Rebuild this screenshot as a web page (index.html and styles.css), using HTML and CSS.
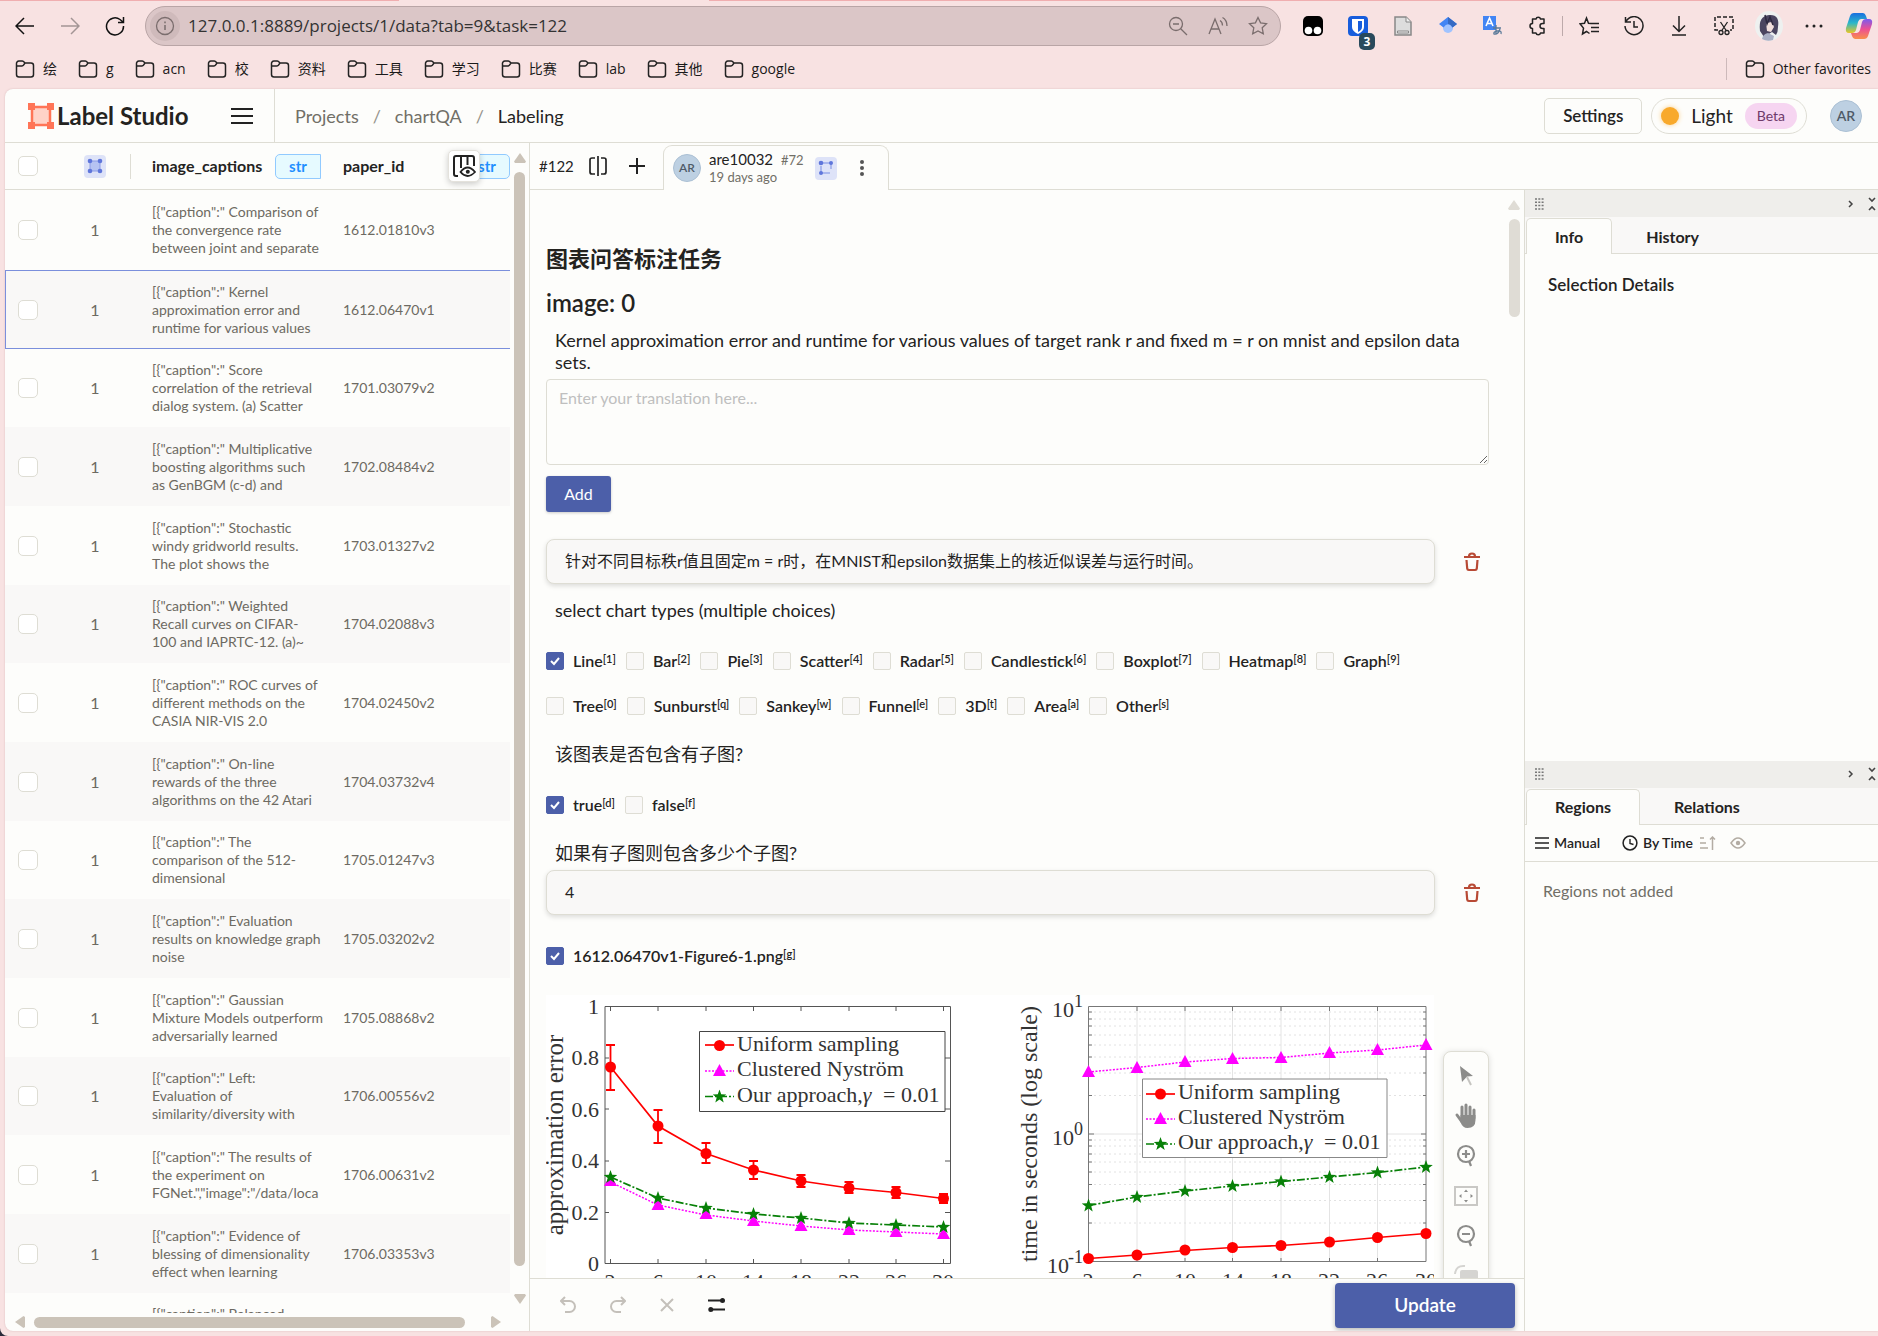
FILE: index.html
```html
<!DOCTYPE html>
<html lang="en">
<head>
<meta charset="utf-8">
<title>Label Studio</title>
<link rel="stylesheet" href="styles.css">
</head>
<body>
<svg class="defs" width="0" height="0" aria-hidden="true">
  <symbol id="folder" viewBox="0 0 20 20"><path d="M1.500 5V15.500a2.500 2.500 0 0 0 2.500 2.500h12a2.500 2.500 0 0 0 2.500-2.500V6.500A2.500 2.500 0 0 0 16 4h-6L8.500 2.500A2 2 0 0 0 7 2H4a2.500 2.500 0 0 0-2.500 3zM1.500 7H7q1 0 1.500-.8L10 4" fill="none" stroke="#222" stroke-width="1.500"/></symbol>
  <symbol id="trash" viewBox="0 0 18 20"><path d="M1 5h16M6 4.500Q6 1.500 9 1.500T12 4.500M3.500 8l.7 8.500q.2 1.500 1.600 1.500h6.400q1.400 0 1.600-1.500L14.500 8" fill="none" stroke="#b84a35" stroke-width="2.200"/></symbol>
  <symbol id="grip" viewBox="0 0 9 12"><path d="M0 1h9M0 4.300h9M0 7.600h9M0 11h9" stroke="#777" stroke-width="1.500" stroke-dasharray="2 1.300"/></symbol>
  <symbol id="collapse" viewBox="0 0 8 14"><path d="M1 1l3 3 3-3M1 13l3-3 3 3" fill="none" stroke="#444" stroke-width="1.600"/></symbol>
  <symbol id="chev" viewBox="0 0 6 8"><path d="M1 1l3 3-3 3" fill="none" stroke="#444" stroke-width="1.500"/></symbol>
  <symbol id="dot" viewBox="-7 -7 14 14"><circle r="5.500" fill="#f00"/></symbol>
  <symbol id="tri" viewBox="-7 -7 14 14"><path d="M0-7L6.500 5h-13z" fill="#f0f"/></symbol>
  <symbol id="star" viewBox="-7 -7 14 14"><path d="M0-7l1.700 4.800 5.100.1-4 3.100L4.200 6 0 3-4.200 6l1.400-5-4-3.100 5.100-.1z" fill="#078007"/></symbol>
</svg>

<header class="toolbar">
  <button class="nav" aria-label="Back"><svg width="20" height="20" viewBox="0 0 20 20"><path d="M19 10H1M9 2L1 10l8 8" fill="none" stroke="#111" stroke-width="1.500"/></svg></button>
  <button class="nav" aria-label="Forward"><svg width="20" height="20" viewBox="0 0 20 20"><path d="M1 10h18M11 2l8 8-8 8" fill="none" stroke="#a39595" stroke-width="1.500"/></svg></button>
  <button class="nav" aria-label="Reload"><svg width="20" height="20" viewBox="0 0 20 20"><path d="M18.500 10A8.500 8.500 0 1 1 15 3.500L18 6M18.500 1v5.500H13" fill="none" stroke="#111" stroke-width="1.500"/></svg></button>
  <div class="address">
    <span class="site"><svg width="20" height="20" viewBox="0 0 20 20"><circle cx="10" cy="10" r="8.500" fill="none" stroke="#7a6d6d" stroke-width="1.300"/><path d="M10 9v5M10 5.500v1.800" stroke="#7a6d6d" stroke-width="1.500"/></svg></span>
    <input class="url" aria-label="Address" value="127.0.0.1:8889/projects/1/data?tab=9&amp;task=122">
    <svg width="20" height="20" viewBox="0 0 20 20"><g fill="none" stroke="#7a6d6d" stroke-width="1.300"><circle cx="8" cy="8" r="6.500"/><path d="M5 8h6M12.700 12.700L19 19"/></g></svg>
    <svg width="20" height="20" viewBox="0 0 20 20"><g fill="none" stroke="#7a6d6d" stroke-width="1.300"><path d="M1 18L7 3l6 15M3 13h8M12 4.500q2.500 1.500 2.500 5M14.500 1.500Q19 4 19 10"/></g></svg>
    <svg width="20" height="20" viewBox="0 0 20 20"><path d="M10 1.500l2.600 5.400 5.900.8-4.300 4.100 1.100 5.900L10 14.900l-5.300 2.800 1.100-5.900L1.500 7.700l5.900-.8z" fill="none" stroke="#7a6d6d" stroke-width="1.300"/></svg>
  </div>
  <div class="ext">
    <button aria-label="Tampermonkey"><svg width="20" height="20" viewBox="0 0 20 20"><rect width="20" height="20" rx="5" fill="#000"/><circle cx="5.500" cy="14.500" r="3.800" fill="#fff"/><circle cx="14.500" cy="14.500" r="3.800" fill="#fff"/></svg></button>
    <button class="badged" aria-label="Bitwarden"><svg width="20" height="20" viewBox="0 0 20 20"><rect width="20" height="20" rx="4" fill="#175ddc"/><path d="M4 3h12v8q0 4-6 7-6-3-6-7z" fill="#fff"/><path d="M10 5h4v6q0 3-4 5z" fill="#175ddc"/></svg><span class="count">3</span></button>
    <button aria-label="Reader"><svg width="20" height="20" viewBox="0 0 20 20"><path d="M2 1h11l5 5v13H2z" fill="#ddd" stroke="#888" stroke-width="1.500"/><path d="M13 1v5h5M4.500 15h11v2h-11z" fill="#eee" stroke="#888"/></svg></button>
    <button aria-label="Scholar"><svg width="20" height="20" viewBox="0 0 20 20"><circle cx="10" cy="12" r="5" fill="#a0c3ff"/><path d="M10 1l9 7-4.500 3.500Q10 5 5.500 11.500L1 8z" fill="#4285f4"/><path d="M10 1l9 7-4.500 3.500Q13 8 10 8z" fill="#356ac3"/></svg></button>
    <button aria-label="Translate"><svg width="20" height="20" viewBox="0 0 20 20"><path d="M0 0h13v14H0z" fill="#4285f4"/><path d="M3 10l3.500-8L10 10M4.500 7.500h4" fill="none" stroke="#fff" stroke-width="1.600"/><path d="M10 12h8M13 9v9M17 13q-2 6-6 5-1-2 3-3 5-1 4 3" fill="none" stroke="#5b7a99" stroke-width="1.300"/></svg></button>
    <button aria-label="Extensions"><svg width="20" height="20" viewBox="0 0 20 20"><path d="M4.500 3H8a2.300 2.300 0 0 1 4.500 0H16v4.500h-1.500a2.500 2.500 0 0 0 0 5H16V17h-3.500a2.300 2.300 0 0 1-4.500 0H4.500v-4.500a2.400 2.400 0 0 1 0-5z" fill="none" stroke="#222" stroke-width="1.500" stroke-linejoin="round"/></svg></button>
    <span class="rule"></span>
    <button aria-label="Favorites"><svg width="20" height="20" viewBox="0 0 20 20"><path d="M12 7.500L9.500 7.200 7.500 2 5.500 7.200 1 7.800l3.500 4.300L3.500 18l4-2.500 3 2M11.500 7.500H20M12 11.500h8M12 15.500h8" fill="none" stroke="#222" stroke-width="1.500"/></svg></button>
    <button aria-label="History"><svg width="20" height="20" viewBox="0 0 20 20"><path d="M2 5.500A9 9 0 1 1 1 10M1.500 1v5H7M10 5v6h4" fill="none" stroke="#222" stroke-width="1.500"/></svg></button>
    <button aria-label="Downloads"><svg width="20" height="20" viewBox="0 0 20 20"><path d="M10 0v15M4 9.500l6 6 6-6M3 19h14" fill="none" stroke="#222" stroke-width="1.500"/></svg></button>
    <button aria-label="Screenshot"><svg width="20" height="20" viewBox="0 0 20 20"><path d="M4 14H1V1h18v13h-3" fill="none" stroke="#222" stroke-width="1.500" stroke-dasharray="4 2"/><path d="M6.500 6l6 9M13.500 6l-6 9" stroke="#222" stroke-width="1.300"/><circle cx="7" cy="16.500" r="2" fill="none" stroke="#222" stroke-width="1.300"/><circle cx="13" cy="16.500" r="2" fill="none" stroke="#222" stroke-width="1.300"/></svg></button>
    <button aria-label="Profile"><svg width="28" height="30" viewBox="0 0 28 30"><ellipse cx="14" cy="15" rx="14" ry="15" fill="#eef1f0"/><path d="M5 20Q3 5 14 4t9 12q0 5-2 8l-4-3-8 5z" fill="#4a4560"/><path d="M11 12l6-1 2 5-3 5-4-1z" fill="#f1dfdc"/><path d="M10 4l2 9 3-7 3 8" fill="none" stroke="#2d2940" stroke-width="1.500"/><path d="M7 28q1-5 6-6l6 3-1 4q-6 2-11-1z" fill="#a9afc4"/></svg></button>
    <button aria-label="More"><svg width="18" height="4" viewBox="0 0 18 4"><path d="M2 2h0M9 2h0M16 2h0" stroke="#222" stroke-width="3" stroke-linecap="round"/></svg></button>
    <button aria-label="Copilot"><svg width="28" height="28" viewBox="0 0 28 28"><defs><linearGradient id="ga" x2="0" y2="1"><stop stop-color="#1a6fe0"/><stop offset=".5" stop-color="#2bb7c9"/><stop offset="1" stop-color="#e8c626"/></linearGradient><linearGradient id="gb" x2="0" y2="1"><stop stop-color="#7a5bf0"/><stop offset=".5" stop-color="#ec4f94"/><stop offset="1" stop-color="#f98f4a"/></linearGradient></defs><path d="M9 1h9q2 0 3 3l1 3h-6q-2 0-3 3l-2 8q-1 3-4 3H4q-4 0-3-5L5 4q1-3 4-3z" fill="url(#ga)"/><path d="M19 27h-9q-2 0-3-3l-1-3h6q2 0 3-3l2-8q1-3 4-3h3q4 0 3 5l-4 12q-1 3-4 3z" fill="url(#gb)"/></svg></button>
  </div>
</header>

<nav class="bookmarks" aria-label="Bookmarks">
  <a href="#"><svg width="20" height="20"><use href="#folder"/></svg>绘</a>
  <a href="#"><svg width="20" height="20"><use href="#folder"/></svg>g</a>
  <a href="#"><svg width="20" height="20"><use href="#folder"/></svg>acn</a>
  <a href="#"><svg width="20" height="20"><use href="#folder"/></svg>校</a>
  <a href="#"><svg width="20" height="20"><use href="#folder"/></svg>资料</a>
  <a href="#"><svg width="20" height="20"><use href="#folder"/></svg>工具</a>
  <a href="#"><svg width="20" height="20"><use href="#folder"/></svg>学习</a>
  <a href="#"><svg width="20" height="20"><use href="#folder"/></svg>比赛</a>
  <a href="#"><svg width="20" height="20"><use href="#folder"/></svg>lab</a>
  <a href="#"><svg width="20" height="20"><use href="#folder"/></svg>其他</a>
  <a href="#"><svg width="20" height="20"><use href="#folder"/></svg>google</a>
  <a class="other" href="#"><svg width="20" height="20"><use href="#folder"/></svg>Other favorites</a>
</nav>

<div class="app">
  <header class="appbar">
    <div class="brand">
      <svg width="26" height="26" viewBox="0 0 26 26"><path d="M4 4h18v18H4z" fill="#ffd3c8" stroke="#ff7557" stroke-width="2.500"/><path d="M0 0h7v7H0zM19 0h7v7h-7zM0 19h7v7H0zM19 19h7v7h-7z" fill="#ff7557"/></svg>
      <span class="name">Label Studio</span>
      <button class="menu" aria-label="Menu"><svg width="22" height="16" viewBox="0 0 22 16"><path d="M0 1h22M0 8h22M0 15h22" stroke="#222" stroke-width="2"/></svg></button>
    </div>
    <nav class="crumbs" aria-label="Breadcrumb"><a href="#">Projects</a><i>/</i><a href="#">chartQA</a><i>/</i><a class="here" href="#">Labeling</a></nav>
    <button class="settings">Settings</button>
    <button class="theme"><span class="sun"></span><span>Light</span><span class="beta">Beta</span></button>
    <span class="avatar big">AR</span>
  </header>

  <div class="work">
    <section class="tasks">
      <div class="tasks-top">
        <div class="tablebox">
          <table>
            <colgroup><col class="c1"><col class="c2"><col class="c3"><col class="c4"></colgroup>
            <thead><tr>
              <th><input class="tick" type="checkbox" aria-label="Select all"></th>
              <th class="mid"><span class="chip"><svg width="16" height="16" viewBox="0 0 16 16"><path d="M3 3h10v10H3z" fill="#b6c3f2" stroke="#8c9ce6"/><g fill="#5f76db"><circle cx="3" cy="3" r="2.300"/><circle cx="13" cy="3" r="2.300"/><circle cx="3" cy="13" r="2.300"/><circle cx="13" cy="13" r="2.300"/></g></svg></span></th>
              <th><div class="head ruled"><span>image_captions</span><span class="tag cut">str</span></div></th>
              <th><div class="head"><span>paper_id</span><span class="tag">str</span></div></th>
            </tr></thead>
            <tbody>
              <tr><td><input class="tick" type="checkbox" aria-label="Select 1612.01810v3"></td><td class="mid">1</td><td>[{"caption":" Comparison of<br>the convergence rate<br>between joint and separate</td><td>1612.01810v3</td></tr>
              <tr class="current"><td><input class="tick" type="checkbox" aria-label="Select 1612.06470v1"></td><td class="mid">1</td><td>[{"caption":" Kernel<br>approximation error and<br>runtime for various values</td><td>1612.06470v1</td></tr>
              <tr><td><input class="tick" type="checkbox" aria-label="Select 1701.03079v2"></td><td class="mid">1</td><td>[{"caption":" Score<br>correlation of the retrieval<br>dialog system. (a) Scatter</td><td>1701.03079v2</td></tr>
              <tr><td><input class="tick" type="checkbox" aria-label="Select 1702.08484v2"></td><td class="mid">1</td><td>[{"caption":" Multiplicative<br>boosting algorithms such<br>as GenBGM (c-d) and</td><td>1702.08484v2</td></tr>
              <tr><td><input class="tick" type="checkbox" aria-label="Select 1703.01327v2"></td><td class="mid">1</td><td>[{"caption":" Stochastic<br>windy gridworld results.<br>The plot shows the</td><td>1703.01327v2</td></tr>
              <tr><td><input class="tick" type="checkbox" aria-label="Select 1704.02088v3"></td><td class="mid">1</td><td>[{"caption":" Weighted<br>Recall curves on CIFAR-<br>100 and IAPRTC-12. (a)~</td><td>1704.02088v3</td></tr>
              <tr><td><input class="tick" type="checkbox" aria-label="Select 1704.02450v2"></td><td class="mid">1</td><td>[{"caption":" ROC curves of<br>different methods on the<br>CASIA NIR-VIS 2.0</td><td>1704.02450v2</td></tr>
              <tr><td><input class="tick" type="checkbox" aria-label="Select 1704.03732v4"></td><td class="mid">1</td><td>[{"caption":" On-line<br>rewards of the three<br>algorithms on the 42 Atari</td><td>1704.03732v4</td></tr>
              <tr><td><input class="tick" type="checkbox" aria-label="Select 1705.01247v3"></td><td class="mid">1</td><td>[{"caption":" The<br>comparison of the 512-<br>dimensional</td><td>1705.01247v3</td></tr>
              <tr><td><input class="tick" type="checkbox" aria-label="Select 1705.03202v2"></td><td class="mid">1</td><td>[{"caption":" Evaluation<br>results on knowledge graph<br>noise</td><td>1705.03202v2</td></tr>
              <tr><td><input class="tick" type="checkbox" aria-label="Select 1705.08868v2"></td><td class="mid">1</td><td>[{"caption":" Gaussian<br>Mixture Models outperform<br>adversarially learned</td><td>1705.08868v2</td></tr>
              <tr><td><input class="tick" type="checkbox" aria-label="Select 1706.00556v2"></td><td class="mid">1</td><td>[{"caption":" Left:<br>Evaluation of<br>similarity/diversity with</td><td>1706.00556v2</td></tr>
              <tr><td><input class="tick" type="checkbox" aria-label="Select 1706.00631v2"></td><td class="mid">1</td><td>[{"caption":" The results of<br>the experiment on<br>FGNet.","image":"/data/loca</td><td>1706.00631v2</td></tr>
              <tr><td><input class="tick" type="checkbox" aria-label="Select 1706.03353v3"></td><td class="mid">1</td><td>[{"caption":" Evidence of<br>blessing of dimensionality<br>effect when learning</td><td>1706.03353v3</td></tr>
              <tr><td></td><td></td><td>[{"caption":" Balanced<br>&nbsp;<br>&nbsp;</td><td></td></tr>
            </tbody>
          </table>
          <button class="columns" aria-label="Columns"><svg width="24" height="24" viewBox="0 0 24 24"><path d="M6 22H4q-2 0-2-2V4q0-2 2-2h16q2 0 2 2v8M9 2v12M15.500 2v9" fill="none" stroke="#222" stroke-width="2"/><path d="M8.500 18q7-9 14.500 0-7.500 8-14.500 0z" fill="#fff" stroke="#222" stroke-width="1.800"/><circle cx="15.800" cy="17.800" r="2" fill="#222"/></svg></button>
        </div>
        <div class="vbar">
          <svg width="12" height="10" viewBox="0 0 12 10"><path d="M6 0l6 8.500-1 1.500H1L0 8.500z"/></svg>
          <span class="thumb"></span>
          <svg width="12" height="10" viewBox="0 0 12 10"><path d="M6 10l6-8.500L11 0H1L0 1.500z"/></svg>
        </div>
      </div>
      <div class="hbar">
        <svg width="10" height="12" viewBox="0 0 10 12"><path d="M0 6l8.500-6L10 1v10l-1.500 1z"/></svg>
        <span class="thumb"></span>
        <svg width="10" height="12" viewBox="0 0 10 12"><path d="M10 6L1.500 0 0 1v10l1.500 1z"/></svg>
      </div>
    </section>

    <main class="editor">
      <div class="tabs">
        <span class="num">#122</span>
        <button aria-label="Compare"><svg width="18" height="20" viewBox="0 0 18 20"><path d="M6 2H3Q1 2 1 4v12q0 2 2 2h3M12 2h3q2 0 2 2v12q0 2-2 2h-3M9 0v20" fill="none" stroke="#222" stroke-width="1.700"/></svg></button>
        <button aria-label="New annotation"><svg width="16" height="16" viewBox="0 0 16 16"><path d="M8 0v16M0 8h16" stroke="#222" stroke-width="2"/></svg></button>
        <div class="anno">
          <span class="avatar">AR</span>
          <div class="who"><div><span class="user">are10032</span><span class="id">#72</span></div><div class="when">19 days ago</div></div>
          <span class="chip"><svg width="16" height="16" viewBox="0 0 16 16"><path d="M3 3h10v10H3z" fill="none" stroke="#9aaaea" stroke-width="1.500" stroke-dasharray="16 5"/><g fill="#5f76db"><circle cx="3" cy="3" r="2.300"/><circle cx="13" cy="3" r="2"/><circle cx="3" cy="13" r="2"/></g></svg></span>
          <button aria-label="Annotation menu"><svg width="4" height="16" viewBox="0 0 4 16"><g fill="#555"><circle cx="2" cy="2" r="2"/><circle cx="2" cy="8" r="2"/><circle cx="2" cy="14" r="2"/></g></svg></button>
        </div>
      </div>
      <div class="panes">
        <div class="center">
          <div class="scroll">
            <form class="form">
              <h2>图表问答标注任务</h2>
              <h3>image: 0</h3>
              <label class="text" for="tr">Kernel approximation error and runtime for various values of target rank r and fixed m = r on mnist and epsilon data<br>sets.</label>
              <textarea id="tr" placeholder="Enter your translation here..."></textarea>
              <button class="add" type="button">Add</button>
              <div class="answer"><p>针对不同目标秩r值且固定m = r时，在MNIST和epsilon数据集上的核近似误差与运行时间。</p><button type="button" aria-label="Delete translation"><svg width="18" height="20"><use href="#trash"/></svg></button></div>
              <p class="text ask">select chart types (multiple choices)</p>
              <div class="choices">
                <label><input type="checkbox" checked>Line<sup>[1]</sup></label>
                <label><input type="checkbox">Bar<sup>[2]</sup></label>
                <label><input type="checkbox">Pie<sup>[3]</sup></label>
                <label><input type="checkbox">Scatter<sup>[4]</sup></label>
                <label><input type="checkbox">Radar<sup>[5]</sup></label>
                <label><input type="checkbox">Candlestick<sup>[6]</sup></label>
                <label><input type="checkbox">Boxplot<sup>[7]</sup></label>
                <label><input type="checkbox">Heatmap<sup>[8]</sup></label>
                <label><input type="checkbox">Graph<sup>[9]</sup></label>
              </div>
              <div class="choices">
                <label><input type="checkbox">Tree<sup>[0]</sup></label>
                <label><input type="checkbox">Sunburst<sup>[q]</sup></label>
                <label><input type="checkbox">Sankey<sup>[w]</sup></label>
                <label><input type="checkbox">Funnel<sup>[e]</sup></label>
                <label><input type="checkbox">3D<sup>[t]</sup></label>
                <label><input type="checkbox">Area<sup>[a]</sup></label>
                <label><input type="checkbox">Other<sup>[s]</sup></label>
              </div>
              <p class="text ask">该图表是否包含有子图?</p>
              <div class="choices">
                <label><input type="checkbox" checked>true<sup>[d]</sup></label>
                <label><input type="checkbox">false<sup>[f]</sup></label>
              </div>
              <p class="text ask">如果有子图则包含多少个子图?</p>
              <div class="answer"><p>4</p><button type="button" aria-label="Delete answer"><svg width="18" height="20"><use href="#trash"/></svg></button></div>
              <div class="choices file">
                <label><input type="checkbox" checked>1612.06470v1-Figure6-1.png<sup>[g]</sup></label>
              </div>
            </form>
            <div class="figure">
              <svg class="plots" viewBox="546 995 888 310" role="img" aria-label="Approximation error and run time plots">
                <path fill="#fff" d="M546 995h888v310H546z"/>
                <g fill="none" stroke="#555">
                  <path d="M605 1006.500h345.500v257H605z"/>
                  <path d="M610.500 1263v-4M658 1263v-4M706 1263v-4M753.500 1263v-4M801 1263v-4M849 1263v-4M896 1263v-4M943.500 1263v-4M610.500 1007v4M658 1007v4M706 1007v4M753.500 1007v4M801 1007v4M849 1007v4M896 1007v4M943.500 1007v4M605 1058h4M605 1109h4M605 1161h4M605 1212.500h4M950 1058h-5M950 1109h-5M950 1161h-5M950 1212.500h-5"/>
                </g>
                <path d="M610.500 1045v45M606 1045h9M606 1090h9M658 1110v33M653.500 1110h9M653.500 1143h9M706 1143v20M701.500 1143h9M701.500 1163h9M753.500 1161v18M749 1161h9M749 1179h9M801 1175v12M796.500 1175h9M796.500 1187h9M849 1182v11M844.500 1182h9M844.500 1193h9M896 1187v11M891.500 1187h9M891.500 1198h9M943.500 1194v9M939 1194h9M939 1203h9" stroke="#f00" stroke-width="1.800"/>
                <path d="M610.500 1067L658 1126l48 27.500 47.500 16.500 47.500 11 48 7 47 4.500 47.500 6" fill="none" stroke="#f00" stroke-width="1.700"/>
                <path d="M610.500 1182L658 1205l48 10 47.500 6 47.500 5 48 4 47 2 47.500 2" fill="none" stroke="#f0f" stroke-width="1.500" stroke-dasharray="2 1.500"/>
                <path d="M610.500 1177L658 1198l48 10 47.500 6 47.500 4 48 5 47 2 47.500 2" fill="none" stroke="#078007" stroke-width="1.700" stroke-dasharray="8 2 2 2"/>
                <g>
                  <use href="#dot" x="603.500" y="1060" width="14" height="14"/><use href="#dot" x="651" y="1119" width="14" height="14"/><use href="#dot" x="699" y="1146.500" width="14" height="14"/><use href="#dot" x="746.500" y="1163" width="14" height="14"/><use href="#dot" x="794" y="1174" width="14" height="14"/><use href="#dot" x="842" y="1181" width="14" height="14"/><use href="#dot" x="889" y="1185.500" width="14" height="14"/><use href="#dot" x="936.500" y="1191.500" width="14" height="14"/>
                  <use href="#tri" x="603.500" y="1174" width="14" height="14"/><use href="#tri" x="651" y="1198" width="14" height="14"/><use href="#tri" x="699" y="1207" width="14" height="14"/><use href="#tri" x="746.500" y="1214" width="14" height="14"/><use href="#tri" x="794" y="1219" width="14" height="14"/><use href="#tri" x="842" y="1223" width="14" height="14"/><use href="#tri" x="889" y="1225" width="14" height="14"/><use href="#tri" x="936.500" y="1227" width="14" height="14"/>
                  <use href="#star" x="603.500" y="1170" width="14" height="14"/><use href="#star" x="651" y="1191" width="14" height="14"/><use href="#star" x="699" y="1201" width="14" height="14"/><use href="#star" x="746.500" y="1207" width="14" height="14"/><use href="#star" x="794" y="1211" width="14" height="14"/><use href="#star" x="842" y="1216" width="14" height="14"/><use href="#star" x="889" y="1218" width="14" height="14"/><use href="#star" x="936.500" y="1220" width="14" height="14"/>
                </g>
                <path d="M699.500 1031.500H945v80H699.500z" fill="#fff" stroke="#444"/>
                <path d="M705 1045h29" stroke="#f00" stroke-width="1.700"/><path d="M705 1071h29" stroke="#f0f" stroke-width="1.500" stroke-dasharray="2 1.500"/><path d="M705 1096.500h29" stroke="#078007" stroke-width="1.700" stroke-dasharray="8 2 2 2"/>
                <use href="#dot" x="712.500" y="1038.500" width="14" height="14"/><use href="#tri" x="712.500" y="1064" width="14" height="14"/><use href="#star" x="712.500" y="1089.500" width="14" height="14"/>
                <g class="tex">
                  <text x="737" y="1051">Uniform sampling</text><text x="737" y="1076">Clustered Nyström</text><text x="737" y="1102">Our approach,<tspan font-style="italic">γ</tspan> <tspan x="883">= 0.01</tspan></text>
                  <g text-anchor="end"><text x="599" y="1014">1</text><text x="599" y="1065">0.8</text><text x="599" y="1117">0.6</text><text x="599" y="1168">0.4</text><text x="599" y="1220">0.2</text><text x="599" y="1271">0</text></g>
                  <g text-anchor="middle"><text x="610" y="1289">2</text><text x="658" y="1289">6</text><text x="706" y="1289">10</text><text x="753" y="1289">14</text><text x="801" y="1289">18</text><text x="849" y="1289">22</text><text x="896" y="1289">26</text><text x="943" y="1289">30</text>
                  <text class="axis wide" transform="translate(563 1135) rotate(-90)">approximation error</text></g>
                </g>

                <path d="M1137 1007v254M1185 1007v254M1232.500 1007v254M1281 1007v254M1329.500 1007v254M1377.500 1007v254M1089 1134h337" stroke="#e4e4e4"/>
                <path d="M1089 1012h337M1089 1019h337M1089 1026h337M1089 1035h337M1089 1045h337M1089 1057h337M1089 1073h337M1089 1095.500h337M1089 1140h337M1089 1146h337M1089 1154h337M1089 1162h337M1089 1172h337M1089 1184.500h337M1089 1200.500h337M1089 1223h337" stroke="#e2e2e2" stroke-dasharray="2 3"/>
                <path d="M1088.500 1006.500H1426v255h-337.500zM1137 1262v-4M1185 1262v-4M1232.500 1262v-4M1281 1262v-4M1329.500 1262v-4M1377.500 1262v-4M1137 1007v4M1185 1007v4M1232.500 1007v4M1281 1007v4M1329.500 1007v4M1377.500 1007v4M1089 1134h5M1426 1134h-5M1426 1012h-3M1426 1019h-3M1426 1026h-3M1426 1035h-3M1426 1057h-3M1426 1073h-3M1426 1095.500h-3M1426 1140h-3M1426 1146h-3M1426 1154h-3M1426 1184.500h-3M1426 1200.500h-3M1426 1223h-3M1089 1012h3M1089 1019h3M1089 1026h3M1089 1035h3M1089 1045h3M1089 1057h3M1089 1095.500h3M1089 1140h3M1089 1146h3M1089 1154h3M1089 1162h3M1089 1172h3M1089 1184.500h3M1089 1223h3" fill="none" stroke="#777"/>
                <path d="M1088.500 1072l48.500-4.500 48-5.500 47.500-3.500 48.500-1 48.500-4.500 48-3 48.500-5" fill="none" stroke="#f0f" stroke-width="1.500" stroke-dasharray="2 1.500"/>
                <path d="M1088.500 1205.500l48.500-8.500 48-6 47.500-5 48.500-4.500 48.500-4.500 48-4.500 48.500-5.500" fill="none" stroke="#078007" stroke-width="1.700" stroke-dasharray="8 2 2 2"/>
                <path d="M1088.500 1258.500l48.500-3.500 48-4.500 47.500-3 48.500-2 48.500-3.500 48-4.500 48.500-4" fill="none" stroke="#f00" stroke-width="1.700"/>
                <g>
                  <use href="#tri" x="1081.500" y="1065" width="14" height="14"/><use href="#tri" x="1130" y="1061" width="14" height="14"/><use href="#tri" x="1178" y="1055" width="14" height="14"/><use href="#tri" x="1225.500" y="1052" width="14" height="14"/><use href="#tri" x="1274" y="1051" width="14" height="14"/><use href="#tri" x="1322.500" y="1046" width="14" height="14"/><use href="#tri" x="1370.500" y="1043" width="14" height="14"/><use href="#tri" x="1419" y="1038" width="14" height="14"/>
                  <use href="#star" x="1081.500" y="1198.500" width="14" height="14"/><use href="#star" x="1130" y="1190" width="14" height="14"/><use href="#star" x="1178" y="1184" width="14" height="14"/><use href="#star" x="1225.500" y="1179" width="14" height="14"/><use href="#star" x="1274" y="1174.500" width="14" height="14"/><use href="#star" x="1322.500" y="1170" width="14" height="14"/><use href="#star" x="1370.500" y="1165.500" width="14" height="14"/><use href="#star" x="1419" y="1160" width="14" height="14"/>
                  <use href="#dot" x="1081.500" y="1251.500" width="14" height="14"/><use href="#dot" x="1130" y="1248" width="14" height="14"/><use href="#dot" x="1178" y="1243" width="14" height="14"/><use href="#dot" x="1225.500" y="1240.500" width="14" height="14"/><use href="#dot" x="1274" y="1238.500" width="14" height="14"/><use href="#dot" x="1322.500" y="1235" width="14" height="14"/><use href="#dot" x="1370.500" y="1230.500" width="14" height="14"/><use href="#dot" x="1419" y="1226.500" width="14" height="14"/>
                </g>
                <path d="M1142.500 1079H1387v78.500h-244.500z" fill="#fff" stroke="#888"/>
                <path d="M1146 1094h29" stroke="#f00" stroke-width="1.700"/><path d="M1146 1119h29" stroke="#f0f" stroke-width="1.500" stroke-dasharray="2 1.500"/><path d="M1146 1144h29" stroke="#078007" stroke-width="1.700" stroke-dasharray="8 2 2 2"/>
                <use href="#dot" x="1153.500" y="1087" width="14" height="14"/><use href="#tri" x="1153.500" y="1112" width="14" height="14"/><use href="#star" x="1153.500" y="1137" width="14" height="14"/>
                <g class="tex">
                  <text x="1178" y="1099">Uniform sampling</text><text x="1178" y="1124">Clustered Nyström</text><text x="1178" y="1149">Our approach,<tspan font-style="italic">γ</tspan> <tspan x="1324">= 0.01</tspan></text>
                  <g text-anchor="end"><text x="1074" y="1017">10</text><text x="1074" y="1145">10</text><text x="1069" y="1273">10</text><text class="pow" x="1083" y="1007">1</text><text class="pow" x="1083" y="1135">0</text><text class="pow" x="1083" y="1263">-1</text></g>
                  <g text-anchor="middle"><text x="1088" y="1288">2</text><text x="1137" y="1288">6</text><text x="1185" y="1288">10</text><text x="1233" y="1288">14</text><text x="1281" y="1288">18</text><text x="1329" y="1288">22</text><text x="1377" y="1288">26</text><text x="1426" y="1288">30</text>
                  <text class="axis" transform="translate(1037 1134) rotate(-90)">time in seconds (log scale)</text></g>
                </g>
              </svg>
              <div class="tools">
                <button aria-label="Select"><svg width="24" height="24" viewBox="0 0 24 24"><path d="M6 2l13 10-6 .5L8 18z" fill="#8c8c8a"/><path d="M13 13l4 8" stroke="#c5c4c0" stroke-width="2"/></svg></button>
                <button aria-label="Pan"><svg width="24" height="26" viewBox="0 0 24 26"><path d="M8 14V4M12 13V2M16 14V4M20 15V7M3 12l5 7" stroke="#8c8c8a" stroke-width="3" stroke-linecap="round"/><path d="M6.500 12h15v5q0 8-8 8-5 0-7-6z" fill="#8c8c8a"/></svg></button>
                <button aria-label="Zoom in"><svg width="24" height="24" viewBox="0 0 24 24"><g fill="none" stroke="#8c8c8a" stroke-width="2.200"><circle cx="12" cy="10" r="8"/><path d="M8 10h8M12 6v8M15 17l2 5"/></g></svg></button>
                <button aria-label="Fit"><svg width="24" height="20" viewBox="0 0 24 20"><path d="M1 1h22v18H1z" fill="none" stroke="#c9c8c5" stroke-width="2"/><path d="M12 3.500l2 2.500h-4zM12 16.500l2-2.500h-4zM5 10l2.500-2v4zM19 10l-2.500-2v4z" fill="#8c8c8a"/></svg></button>
                <button aria-label="Zoom out"><svg width="24" height="24" viewBox="0 0 24 24"><g fill="none" stroke="#8c8c8a" stroke-width="2.200"><circle cx="12" cy="10" r="8"/><path d="M8 10h8M15 17l2 5"/></g></svg></button>
                <button aria-label="Rotate"><svg width="24" height="24" viewBox="0 0 24 24"><path d="M1 10Q2 1 11 2" fill="none" stroke="#d5d4d1" stroke-width="2"/><rect x="6" y="6" width="18" height="15" rx="2" fill="#d5d4d1"/></svg></button>
              </div>
            </div>
          </div>
          <div class="vbar light">
            <svg width="12" height="10" viewBox="0 0 12 10"><path d="M6 0l6 8.500-1 1.500H1L0 8.500z"/></svg>
            <span class="thumb"></span>
          </div>
          <footer class="actions">
            <button aria-label="Undo"><svg width="16" height="18" viewBox="0 0 16 18"><path d="M5 1L1 5l4 4M1 5h8.500a5.500 5.500 0 0 1 0 11H5" fill="none" stroke="#c4c0ba" stroke-width="2"/></svg></button>
            <button aria-label="Redo"><svg width="16" height="18" viewBox="0 0 16 18"><path d="M11 1l4 4-4 4M15 5H6.500a5.500 5.500 0 0 0 0 11H11" fill="none" stroke="#c4c0ba" stroke-width="2"/></svg></button>
            <button aria-label="Reset"><svg width="14" height="14" viewBox="0 0 14 14"><path d="M1 1l12 12M13 1L1 13" stroke="#c4c0ba" stroke-width="2"/></svg></button>
            <button aria-label="Settings"><svg width="18" height="14" viewBox="0 0 18 14"><path d="M0 2.500h14M4 11.500h13" stroke="#222" stroke-width="2"/><circle cx="14.500" cy="2.500" r="2.500" fill="#222"/><circle cx="2.800" cy="11.500" r="2.500" fill="#222"/></svg></button>
            <button class="update">Update</button>
          </footer>
        </div>
        <aside class="side">
          <section>
            <div class="strip"><svg width="9" height="12"><use href="#grip"/></svg><svg class="push" width="6" height="8"><use href="#chev"/></svg><svg width="8" height="14"><use href="#collapse"/></svg></div>
            <div class="sidetabs"><button class="on">Info</button><button>History</button></div>
            <h4>Selection Details</h4>
          </section>
          <section>
            <div class="strip"><svg width="9" height="12"><use href="#grip"/></svg><svg class="push" width="6" height="8"><use href="#chev"/></svg><svg width="8" height="14"><use href="#collapse"/></svg></div>
            <div class="sidetabs"><button class="on">Regions</button><button>Relations</button></div>
            <div class="sorts">
              <button><svg width="14" height="12" viewBox="0 0 14 12"><path d="M0 1h14M0 6h14M0 11h14" stroke="#222" stroke-width="1.600"/></svg>Manual</button>
              <button><svg width="16" height="16" viewBox="0 0 16 16"><circle cx="8" cy="8" r="6.900" fill="none" stroke="#222" stroke-width="1.500"/><path d="M8 4v4.500l3.500 1" fill="none" stroke="#222" stroke-width="1.400"/></svg>By Time</button>
              <button aria-label="Sort order"><svg width="16" height="14" viewBox="0 0 16 14"><path d="M0 2h4M0 7h6M0 12h8M12.500 14V1M10 3.500L12.500 1 15 3.500" fill="none" stroke="#b3aca3" stroke-width="1.500"/></svg></button>
              <button aria-label="Visibility"><svg width="16" height="12" viewBox="0 0 16 12"><path d="M1 6q7-10 14 0-7 10-14 0z" fill="none" stroke="#b3aca3" stroke-width="1.500"/><circle cx="8" cy="6" r="2.200" fill="#b3aca3"/></svg></button>
            </div>
            <p class="empty">Regions not added</p>
          </section>
        </aside>
      </div>
    </main>
  </div>
</div>
</body>
</html>
```

FILE: styles.css
```css
* { box-sizing: border-box; }
html { background: #2b2b3a; height: 100%; }
body {
  margin: 0; height: 100vh; overflow: hidden;
  display: flex; flex-direction: column;
  background: linear-gradient(90deg, #f0aeb0 399px, transparent 399px 709px, #f0aeb0 709px) top / 100% 1px no-repeat #f8e2e2;
  border-bottom-left-radius: 8px;
  color: #24231f;
  font: 16px/22px Lato, "Noto Sans CJK SC", sans-serif;
}
button, input, textarea { font: inherit; color: inherit; }
button { background: none; border: 0; padding: 0; margin: 0; display: inline-flex; align-items: center; justify-content: center; }
a { color: inherit; text-decoration: none; }
h2, h3, h4, p { margin: 0; }
svg { display: block; flex: none; }
.defs { position: absolute; }

/* browser chrome */
.toolbar, .bookmarks { font-family: "Open Sans", "Noto Sans CJK SC", sans-serif; color: #1b1a1a; flex: none; display: flex; align-items: center; }
.toolbar { height: 52px; padding-left: 2px; }
.nav { width: 45px; height: 40px; }
.address { flex: 1; margin-left: 8px; height: 40px; border: 1px solid #b9a5a6; border-radius: 20px; background: #dbc6c7; display: flex; align-items: center; gap: 20px; padding: 0 12px 0 4px; }
.site { width: 30px; height: 30px; border-radius: 15px; background: #cfbabb; display: flex; align-items: center; justify-content: center; margin-right: -12px; }
.url { flex: 1; min-width: 0; border: 0; background: none; font-size: 17px; padding: 0; color: #333; }
.ext { display: flex; align-items: center; margin: 0 -3px 0 9px; }
.ext button { width: 45px; height: 40px; position: relative; }
.ext .rule { width: 1px; height: 20px; background: #bda9aa; margin: 0 3px 0 2px; }
.count { position: absolute; right: 5px; bottom: -4px; width: 16px; height: 17px; border-radius: 5px; background: #294a5c; color: #fff; font: bold 12px/17px "Open Sans", sans-serif; }
.bookmarks { height: 37px; padding: 0 7px 4px 15px; gap: 21px; font-size: 14px; }
.bookmarks a { display: flex; align-items: center; gap: 8px; white-space: nowrap; }
.bookmarks .other { margin-left: auto; border-left: 1px solid #cdb9ba; padding-left: 18px; }

/* application shell */
.app { flex: 1; min-height: 0; margin: 0 0 5px 5px; background: #fdfdfb; border-radius: 8px 0 0 8px; overflow: hidden; display: flex; flex-direction: column; box-shadow: 0 0 2px #d9b9ba; }
.appbar { flex: none; height: 54px; border-bottom: 1px solid #deddd4; display: flex; align-items: center; padding-right: 16px; }
.brand { width: 270px; height: 100%; border-right: 1px solid #deddd4; display: flex; align-items: center; padding: 0 21px 0 23px; }
.name { font-size: 24px; font-weight: 700; margin-left: 3px; white-space: nowrap; }
.menu { margin-left: auto; }
.crumbs { flex: 1; display: flex; gap: 14px; padding-left: 20px; font-size: 18px; color: #716f67; }
.crumbs i { font-style: normal; color: #96948c; }
.crumbs .here { color: #24231f; }
.settings { height: 36px; width: 98px; border: 1px solid #deddd4; border-radius: 5px; font-weight: 600; font-size: 17px; }
.theme { height: 36px; margin: 0 23px 0 9px; border: 1px solid #deddd4; border-radius: 18px; padding: 0 9px; font-size: 19px; gap: 12px; }
.sun { width: 18px; height: 18px; border-radius: 9px; background: #f8a92b; box-shadow: 0 0 5px #fbd28f; }
.beta { background: #f6d5f1; color: #6e3a6a; border-radius: 13px; height: 26px; line-height: 26px; font-size: 14px; padding: 0 12px; }
.avatar { width: 28px; height: 28px; flex: none; border-radius: 50%; background: #bdd0e2; border: 1px solid #abc0d4; color: #4f5b68; font-size: 12px; line-height: 26px; text-align: center; font-weight: 600; }
.avatar.big { width: 32px; height: 32px; line-height: 30px; font-size: 14px; }
.work { flex: 1; min-height: 0; display: flex; }

/* task list */
.tasks { width: 525px; flex: none; border-right: 1px solid #deddd4; display: flex; flex-direction: column; }
.tasks-top { flex: 1; min-height: 0; display: flex; }
.tablebox { flex: 1; overflow: hidden; position: relative; }
table { width: 100%; table-layout: fixed; border-collapse: separate; border-spacing: 0; }
.c1 { width: 55px; } .c2 { width: 70px; } .c3 { width: 191px; }
th { height: 47px; padding: 0; text-align: left; font-size: 16px; font-weight: 700; border-bottom: 1px solid #deddd4; }
td { height: 79px; padding: 0 0 0 22px; font-size: 14px; line-height: 18px; color: #6d6a62; white-space: nowrap; }
tbody tr:first-child td { height: 80px; }
tbody tr:nth-child(3n) td { height: 78px; }
td:first-child, th:first-child { padding-left: 13px; }
.mid { text-align: center; padding: 0; }
td.mid { font-size: 16px; }
th .chip { margin: 0 auto; }
tbody tr:nth-child(even) td { background: #f9f8f7; }
.current td { border: solid #7b8fdc; border-width: 1px 0; }
.current td:first-child { border-left-width: 1px; padding-left: 12px; }
.tick { appearance: none; display: block; width: 20px; height: 20px; margin: 0; border: 1px solid #deddd4; border-radius: 5px; background: #fff; }
.head { display: flex; align-items: center; justify-content: space-between; height: 25px; padding-left: 22px; }
.ruled { border-left: 1px solid #deddd4; padding-left: 21px; }
.tag { width: 46px; height: 25px; border: 1px solid #91caff; border-radius: 5px; background: #e6faff; color: #1f8fff; text-align: center; line-height: 22px; font-size: 15px; }
.tag.cut { border-radius: 5px 0 0 5px; }
.chip { display: flex; align-items: center; justify-content: center; width: 22px; height: 23px; border-radius: 4px; background: #dee3f8; flex: none; }
.columns { position: absolute; right: 30px; top: 7px; width: 32px; height: 32px; background: #fff; border: 1px solid #e4e2dc; border-radius: 5px; box-shadow: 0 2px 6px #0003; }
.vbar { width: 19px; flex: none; display: flex; flex-direction: column; align-items: center; gap: 9px; padding: 10px 0 9px; fill: #cbc3b8; }
.vbar .thumb { width: 11px; flex: 1; border-radius: 6px; background: #cbc3b8; margin-bottom: 19px; }
.hbar { height: 18px; display: flex; align-items: center; gap: 9px; padding: 0 28px 0 10px; fill: #cbc3b8; }
.hbar .thumb { flex: 1; height: 11px; border-radius: 6px; background: #cbc3b8; margin-right: 17px; }

/* annotation editor */
.editor { flex: 1; min-width: 0; display: flex; flex-direction: column; }
.tabs { flex: none; height: 47px; display: flex; align-items: center; padding-left: 9px; border-bottom: 1px solid #deddd4; }
.num { font-size: 15px; width: 50px; }
.tabs > button { margin-right: 22px; }
.tabs > button + button { margin-right: 18px; }
.anno { align-self: flex-end; height: 45px; margin-bottom: -1px; width: 226px; border: 1px solid #deddd4; border-bottom: 0; border-radius: 9px 9px 0 0; background: #fdfdfb; display: flex; align-items: center; padding: 0 24px 0 9px; }
.who { flex: 1; padding-left: 8px; line-height: 17px; font-size: 15px; white-space: nowrap; }
.id { margin-left: 8px; font-size: 13px; color: #716f67; }
.when { font-size: 13px; color: #716f67; }
.anno .chip { margin-right: 23px; }
.panes { flex: 1; min-height: 0; display: flex; }
.center { flex: 1; min-width: 0; display: grid; grid-template: minmax(0, 1fr) 53px / minmax(0, 1fr) 20px; }
.scroll { overflow: hidden; padding: 53px 15px 0 16px; }
h2 { font-size: 22px; line-height: 32px; font-weight: 700; }
h3 { font-size: 24px; line-height: 28px; font-weight: 600; margin: 14px 0 12px; }
.text { display: block; font-size: 18px; line-height: 22px; padding-left: 9px; white-space: nowrap; }
textarea { display: block; width: 100%; height: 86px; margin: 6px 0 11px; border: 1px solid #deddd4; border-radius: 4px; background: #fdfdfb; padding: 7px 12px; font-size: 16px; }
textarea::placeholder { color: #bfbfbf; }
.add { width: 65px; height: 36px; border-radius: 3px; background: #4c5fa9; color: #fff; font-size: 16px; margin-bottom: 27px; box-shadow: 0 1px 3px #0003; }
.answer { display: flex; align-items: center; gap: 28px; padding-right: 8px; }
.answer p { flex: 1; height: 45px; line-height: 41px; border: 1px solid #deddd4; border-radius: 8px; background: #f9f8f7; box-shadow: 0 2px 5px #0002; padding-left: 18px; font-size: 16px; white-space: nowrap; }
.ask { margin-top: 15px; }
.choices { display: flex; gap: 10px; height: 45px; align-items: center; font-size: 16px; font-weight: 600; }
.choices label { display: flex; align-items: center; white-space: nowrap; }
.choices input { appearance: none; width: 18px; height: 18px; margin: 0 9px 0 0; border: 1px solid #deddd4; border-radius: 2px; background: #f9f8f7; }
.choices input:checked { border-color: #4c5fa9; background: #4c5fa9 url("data:image/svg+xml,%3Csvg xmlns='http://www.w3.org/2000/svg' viewBox='0 0 16 16'%3E%3Cpath d='M4 8l3 3 5-6' fill='none' stroke='white' stroke-width='2'/%3E%3C/svg%3E"); }
.choices sup { font-size: 11px; line-height: 17px; align-self: flex-start; }
.ask + .choices { margin-top: 17px; }
.file { margin-top: 18px; }
.ask + .answer { margin-top: 6px; }
.figure { display: flex; margin-top: 17px; align-items: flex-start; gap: 9px; }
.plots { flex: 1; min-width: 0; }
.tex { font: 22px "Liberation Serif", serif; fill: #333; }
.pow { font-size: 18px; }
.axis { font-size: 24px; }
.axis.wide { font-size: 25px; }
.tools { margin-top: 56px; width: 46px; height: 300px; border: 1px solid #deddd4; border-radius: 8px; background: #fdfdfb; box-shadow: 0 1px 6px #0002; display: flex; flex-direction: column; align-items: center; padding-top: 4px; }
.tools button { height: 40px; }
.light { width: 20px; fill: #dfdcd5; }
.light .thumb { background: #dfdcd5; flex: none; height: 98px; margin: 0; }
.actions { grid-column: 1 / 3; border-top: 1px solid #deddd4; display: flex; align-items: center; padding: 0 9px 0 30px; gap: 34px; }
.update { margin-left: auto; width: 180px; height: 45px; border-radius: 4px; background: #4c5fa9; color: #fff; font-size: 19px; font-weight: 600; box-shadow: 0 2px 5px #0004; }

/* side panels */
.side { width: 354px; flex: none; border-left: 1px solid #deddd4; display: grid; grid-template-rows: 1fr 1fr; }
.strip { height: 27px; background: #efeeeb; display: flex; align-items: center; padding: 0 2px 0 10px; gap: 14px; }
.push { margin-left: auto; }
.sidetabs { height: 37px; background: #f9f8f7; border-bottom: 1px solid #deddd4; padding: 1px 0 0 1px; display: flex; font-size: 16px; font-weight: 700; }
.sidetabs button { padding: 0 28px 0 33px; height: 36px; border: 1px solid transparent; border-bottom: 0; }
.sidetabs .on { background: #fdfdfb; border-color: #deddd4; border-radius: 5px 5px 0 0; padding: 0 28px; }
h4 { font-size: 17px; font-weight: 600; padding: 20px 23px; }
.sorts { height: 37px; border-bottom: 1px solid #deddd4; display: flex; align-items: center; padding-left: 10px; font-size: 14px; font-weight: 600; gap: 14px; }
.sorts button { gap: 5px; }
.sorts button:nth-child(2) { margin-left: 8px; margin-right: -7px; }
.empty { padding: 18px; font-size: 16px; color: #716f67; }
```
